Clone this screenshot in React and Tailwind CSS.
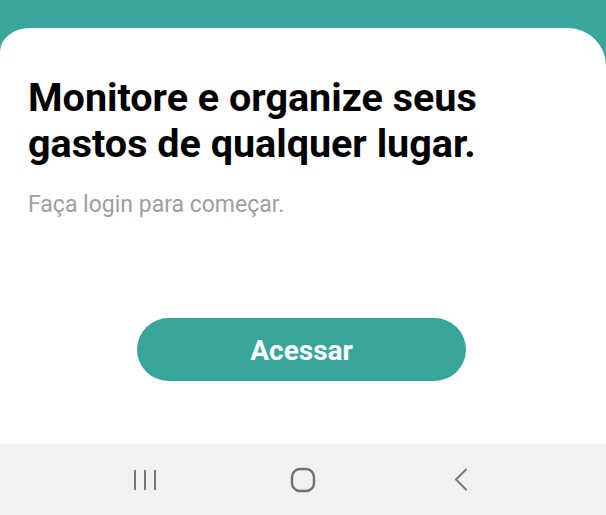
const NavBar = () => {
  return (
    <div className="h-[71px] bg-[#f1f1f1] flex items-center justify-center gap-[118px]">
      <div className="w-[40px] flex justify-center">
        <svg width="24" height="22" viewBox="0 0 24 22" fill="none" stroke="#777" strokeWidth="2">
          <line x1="2" y1="1" x2="2" y2="21" />
          <line x1="12" y1="1" x2="12" y2="21" />
          <line x1="22" y1="1" x2="22" y2="21" />
        </svg>
      </div>
      <div className="w-[40px] flex justify-center">
        <svg width="26" height="26" viewBox="0 0 26 26" fill="none" stroke="#707070" strokeWidth="2.4">
          <rect x="2" y="2" width="22" height="22" rx="8" />
        </svg>
      </div>
      <div className="w-[40px] flex justify-center">
        <svg width="14" height="23" viewBox="0 0 14 23" fill="none" stroke="#777" strokeWidth="2" strokeLinecap="round" strokeLinejoin="round">
          <polyline points="12,1.5 2,11.5 12,21.5" />
        </svg>
      </div>
    </div>
  )
}

const App = () => {
  return (
    <div className="w-[606px] h-[515px] bg-[#3aa69b] flex flex-col overflow-hidden" style={{ fontFamily: 'Roboto, "Liberation Sans", sans-serif' }}>
      <div className="h-[28px] shrink-0"></div>
      <div className="flex-1 bg-white rounded-tl-[30px_24px] rounded-tr-[38px] px-[28px] pt-[47px]">
        <h1 className="text-[39.5px] leading-[46px] font-bold text-black">
          Monitore e organize seus
          <br />
          gastos de qualquer lugar.
        </h1>
        <p className="mt-[24px] text-[23px] leading-[27px] text-[#9e9e9e]">Faça login para começar.</p>
        <button className="mt-[100px] ml-[109px] w-[329px] h-[63px] pt-[3px] rounded-full bg-[#38a59a] text-white text-[28px] font-bold">
          Acessar
        </button>
      </div>
      <NavBar />
    </div>
  )
}

export default App
